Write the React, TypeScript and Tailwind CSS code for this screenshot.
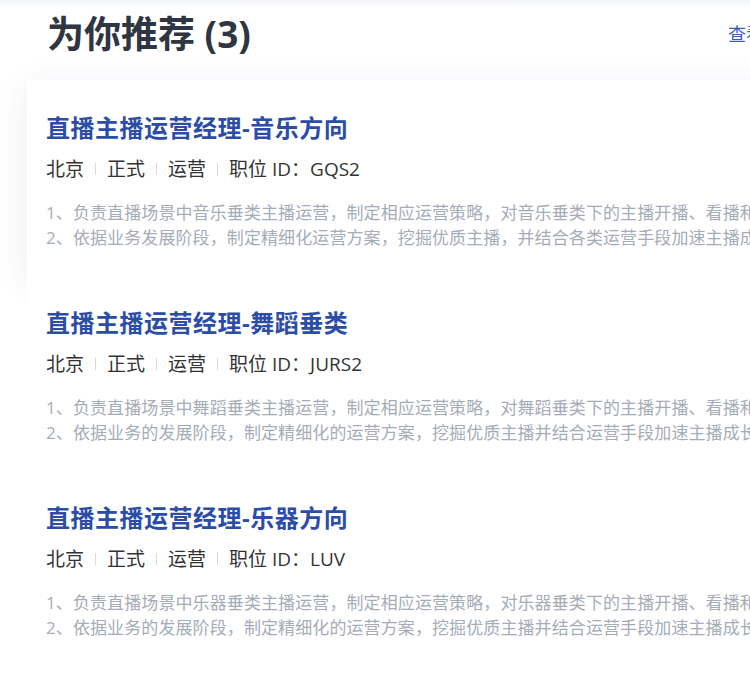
const jobs = [
  {
    title: '直播主播运营经理-音乐方向',
    id: 'GQS2',
    lines: [
      '1、负责直播场景中音乐垂类主播运营，制定相应运营策略，对音乐垂类下的主播开播、看播和营收等核心指标负责；',
      '2、依据业务发展阶段，制定精细化运营方案，挖掘优质主播，并结合各类运营手段加速主播成长；',
    ],
  },
  {
    title: '直播主播运营经理-舞蹈垂类',
    id: 'JURS2',
    lines: [
      '1、负责直播场景中舞蹈垂类主播运营，制定相应运营策略，对舞蹈垂类下的主播开播、看播和营收等核心指标负责；',
      '2、依据业务的发展阶段，制定精细化的运营方案，挖掘优质主播并结合运营手段加速主播成长；',
    ],
  },
  {
    title: '直播主播运营经理-乐器方向',
    id: 'LUV',
    lines: [
      '1、负责直播场景中乐器垂类主播运营，制定相应运营策略，对乐器垂类下的主播开播、看播和营收等核心指标负责；',
      '2、依据业务的发展阶段，制定精细化的运营方案，挖掘优质主播并结合运营手段加速主播成长；',
    ],
  },
]

function Sep() {
  return <span className="mx-[11px] inline-block h-[12px] w-px bg-[#d6d9e0]" />
}

function JobCard({ job, active }: { job: (typeof jobs)[number]; active?: boolean }) {
  return (
    <div
      className={
        active
          ? 'h-[195px] bg-white pt-[32px] pl-[19px] shadow-[0_8px_32px_rgba(30,50,120,0.09)]'
          : 'h-[195px] bg-white pt-[32px] pl-[19px]'
      }
    >
      <h3 className="whitespace-nowrap text-[24px] font-bold leading-8 tracking-[0.5px] text-[#2b4da8]">
        {job.title}
      </h3>
      <div className="mt-[11px] flex items-center whitespace-nowrap text-[19px] leading-7 text-[#333]">
        <span>北京</span>
        <Sep />
        <span>正式</span>
        <Sep />
        <span>运营</span>
        <Sep />
        <span>职位 ID：{job.id}</span>
      </div>
      <div className="mt-[17px] text-[17px] leading-[25px] tracking-[0.1px] text-[#a6acb7]">
        {job.lines.map((l) => (
          <p key={l} className="whitespace-nowrap">
            {l}
          </p>
        ))}
      </div>
    </div>
  )
}

export default function App() {
  return (
    <div
      className="relative h-[679px] w-[750px] overflow-hidden bg-white"
      style={{ fontFamily: '"Open Sans", "Noto Sans CJK SC", sans-serif' }}
    >
      <div className="h-[8px] bg-gradient-to-b from-[#f3f4f7] to-white" />
      <div className="flex w-[800px] items-center justify-between pl-[47px]">
        <h2 className="text-[37px] font-bold leading-[52px] text-[#2f3541]">为你推荐 (3)</h2>
        <a className="text-[18px] text-[#3b5cb8]">查看全部</a>
      </div>
      <div className="ml-[27px] mt-[20px] w-[1000px]">
        {jobs.map((j, i) => (
          <JobCard key={j.id} job={j} active={i === 0} />
        ))}
      </div>
    </div>
  )
}
